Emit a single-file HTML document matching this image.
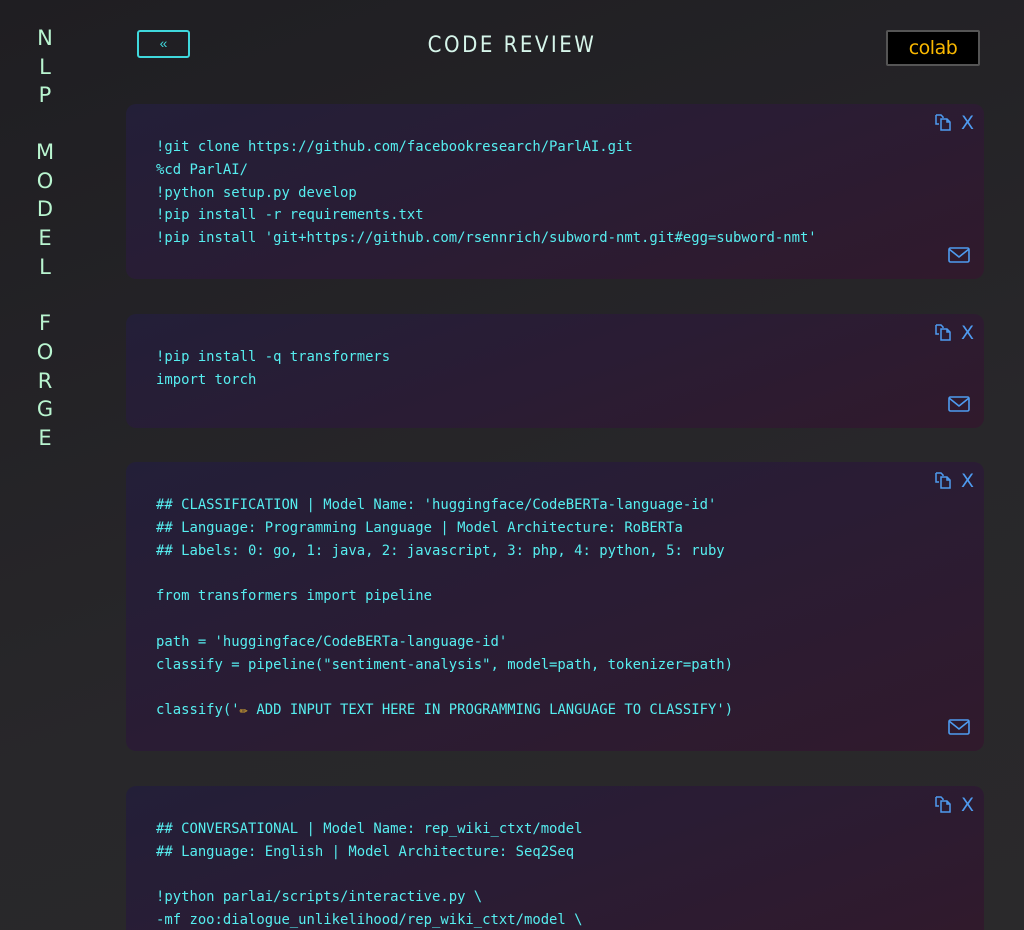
<!DOCTYPE html>
<html><head><meta charset="utf-8"><style>
*{margin:0;padding:0;box-sizing:border-box}
html,body{width:1024px;height:930px;overflow:hidden}
body{background:linear-gradient(160deg,#1f1e22 0%,#28272a 60%,#2a292b 100%);font-family:"Liberation Sans",sans-serif;position:relative}
.side{position:absolute;left:0;top:0;width:90px;height:930px}
.side span{position:absolute;left:0;width:90px;text-align:center;color:#b9f5d0;font-size:21px;font-family:"DejaVu Sans",sans-serif;line-height:24px}
.back{position:absolute;left:137px;top:30px;width:53px;height:28px;border:2px solid #3fd8dc;border-radius:3px;color:#3fd8dc;font-size:14px;text-align:center;line-height:23px}
.title{position:absolute;left:0;width:1024px;top:33px;text-align:center;color:#d6f5ea;font-size:22px;letter-spacing:2.5px;font-family:"Liberation Sans Narrow","DejaVu Sans Condensed","Liberation Sans",sans-serif}
.colab{position:absolute;left:886px;top:30px;width:94px;height:36px;background:#000;border:2px solid #555;border-radius:2px;color:#f9b800;font-size:19px;text-align:center;line-height:32px;letter-spacing:-0.5px;font-family:"DejaVu Sans",sans-serif}
.card{position:absolute;left:126px;width:858px;border-radius:10px;background:linear-gradient(160deg,#231f38 0%,#2a1c34 50%,#301a2c 100%);padding:32px 30px 0 30px}
pre{font-family:"DejaVu Sans Mono","Liberation Mono",monospace;font-size:13.9px;line-height:22.8px;color:#56eef0}
.cp{position:absolute;right:32px;top:9px}
.x{position:absolute;right:10px;top:8px;color:#4e9bf0;font-size:19px;font-family:"DejaVu Sans",sans-serif}
.ml{position:absolute;right:14px;bottom:16px}
</style></head><body>
<div class="side">
<span style="top:26px">N</span><span style="top:55px">L</span><span style="top:83px">P</span>
<span style="top:140px">M</span><span style="top:169px">O</span><span style="top:197px">D</span><span style="top:226px">E</span><span style="top:255px">L</span>
<span style="top:311px">F</span><span style="top:340px">O</span><span style="top:369px">R</span><span style="top:397px">G</span><span style="top:426px">E</span>
</div>
<div class="back">«</div>
<div class="title">CODE REVIEW</div>
<div class="colab">colab</div>

<div class="card" style="top:104px;height:175px">
<svg class="cp" width="18" height="18" viewBox="0 0 18 18" fill="none" stroke="#4e9bf0" stroke-width="1.5"><path d="M2 2h5l2 2v1M2 2v9h3"/><path d="M7 6h6l3 3v8H7z"/><path d="M13 6v3h3"/></svg>
<div class="x">X</div>
<pre>!git clone https://github.com/facebookresearch/ParlAI.git
%cd ParlAI/
!python setup.py develop
!pip install -r requirements.txt
!pip install 'git+https://github.com/rsennrich/subword-nmt.git#egg=subword-nmt'</pre>
<svg class="ml" width="22" height="16" viewBox="0 0 22 16" fill="none" stroke="#4e9bf0" stroke-width="1.6"><rect x="1" y="1" width="20" height="14" rx="1.5"/><path d="M1 2l10 8 10-8"/></svg>
</div>

<div class="card" style="top:314px;height:114px">
<svg class="cp" width="18" height="18" viewBox="0 0 18 18" fill="none" stroke="#4e9bf0" stroke-width="1.5"><path d="M2 2h5l2 2v1M2 2v9h3"/><path d="M7 6h6l3 3v8H7z"/><path d="M13 6v3h3"/></svg>
<div class="x">X</div>
<pre>!pip install -q transformers
import torch</pre>
<svg class="ml" width="22" height="16" viewBox="0 0 22 16" fill="none" stroke="#4e9bf0" stroke-width="1.6"><rect x="1" y="1" width="20" height="14" rx="1.5"/><path d="M1 2l10 8 10-8"/></svg>
</div>

<div class="card" style="top:462px;height:289px">
<svg class="cp" width="18" height="18" viewBox="0 0 18 18" fill="none" stroke="#4e9bf0" stroke-width="1.5"><path d="M2 2h5l2 2v1M2 2v9h3"/><path d="M7 6h6l3 3v8H7z"/><path d="M13 6v3h3"/></svg>
<div class="x">X</div>
<pre>## CLASSIFICATION | Model Name: 'huggingface/CodeBERTa-language-id'
## Language: Programming Language | Model Architecture: RoBERTa
## Labels: 0: go, 1: java, 2: javascript, 3: php, 4: python, 5: ruby

from transformers import pipeline

path = 'huggingface/CodeBERTa-language-id'
classify = pipeline("sentiment-analysis", model=path, tokenizer=path)

classify('<span style="color:#f5c030">✏</span> ADD INPUT TEXT HERE IN PROGRAMMING LANGUAGE TO CLASSIFY')</pre>
<svg class="ml" width="22" height="16" viewBox="0 0 22 16" fill="none" stroke="#4e9bf0" stroke-width="1.6"><rect x="1" y="1" width="20" height="14" rx="1.5"/><path d="M1 2l10 8 10-8"/></svg>
</div>

<div class="card" style="top:786px;height:144px;border-bottom-left-radius:0;border-bottom-right-radius:0;overflow:hidden">
<svg class="cp" width="18" height="18" viewBox="0 0 18 18" fill="none" stroke="#4e9bf0" stroke-width="1.5"><path d="M2 2h5l2 2v1M2 2v9h3"/><path d="M7 6h6l3 3v8H7z"/><path d="M13 6v3h3"/></svg>
<div class="x">X</div>
<pre>## CONVERSATIONAL | Model Name: rep_wiki_ctxt/model
## Language: English | Model Architecture: Seq2Seq

!python parlai/scripts/interactive.py \
-mf zoo:dialogue_unlikelihood/rep_wiki_ctxt/model \</pre>
</div>
</body></html>
